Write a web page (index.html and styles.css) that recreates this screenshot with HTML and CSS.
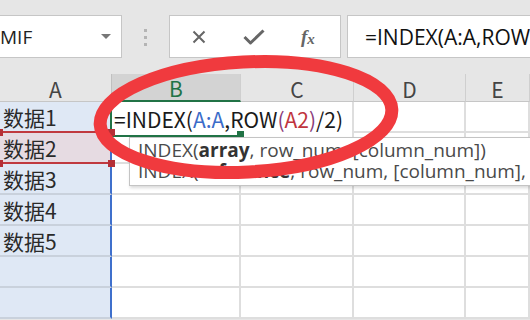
FILE: index.html
```html
<!DOCTYPE html>
<html lang="zh-CN">
<head>
  <meta charset="UTF-8" />
  <title>INDEX ROW</title>
  <link rel="stylesheet" href="styles.css">
</head>
<body>
  <div class="app">

    <div class="toolbar">
      <div class="namebox">
        <span class="name">MIF</span>
        <span class="caret"></span>
      </div>
      <div class="grip"><i></i><i></i><i></i></div>
      <div class="fx-buttons">
        <svg class="icon" width="14" height="14" viewBox="0 0 14 14">
          <path d="M1.5 1.5 L12.5 12.5 M12.5 1.5 L1.5 12.5" stroke="#666" stroke-width="2" fill="none"/>
        </svg>
        <svg class="icon check" width="22" height="16" viewBox="0 0 22 16">
          <path d="M1.5 8 L7.5 14 L20.5 1.5" stroke="#666" stroke-width="3" fill="none" stroke-linejoin="round"/>
        </svg>
        <span class="fx">f<sub>x</sub></span>
      </div>
      <div class="formula">=INDEX(A:A,ROW(A2)/2)</div>
    </div>

    <div class="sheet">
      <div class="hd hd-a">A</div>
      <div class="hd hd-active">B</div>
      <div class="hd">C</div>
      <div class="hd">D</div>
      <div class="hd">E</div>

      <div class="cell col-a row-edit">数据1</div>
      <div class="cell editing">=INDEX(<span class="ref-blue">A:A</span>,ROW<span class="paren">(</span><span class="ref-red">A2</span><span class="paren">)</span>/2)</div>
      <div class="cell"></div>
      <div class="cell"></div>

      <div class="cell col-a ref-cell">数据2<span class="knob left-top"></span><span class="knob left-bottom"></span></div>
      <div class="cell"></div><div class="cell"></div><div class="cell"></div><div class="cell"></div>

      <div class="cell col-a">数据3</div>
      <div class="cell"></div><div class="cell"></div><div class="cell"></div><div class="cell"></div>

      <div class="cell col-a">数据4</div>
      <div class="cell"></div><div class="cell"></div><div class="cell"></div><div class="cell"></div>

      <div class="cell col-a">数据5</div>
      <div class="cell"></div><div class="cell"></div><div class="cell"></div><div class="cell"></div>

      <div class="cell col-a"></div>
      <div class="cell"></div><div class="cell"></div><div class="cell"></div><div class="cell"></div>

      <div class="cell col-a"></div>
      <div class="cell"></div><div class="cell"></div><div class="cell"></div><div class="cell"></div>
    </div>

    <div class="tip">
      <div>INDEX(<b>array</b>, row_num, [column_num])</div>
      <div>INDEX(<b>reference</b>, row_num, [column_num], [area_num])</div>
    </div>

    <svg class="circle" width="530" height="320" viewBox="0 0 530 320">
      <ellipse cx="246" cy="117" rx="146" ry="55" transform="rotate(-3 246 117)"
               fill="none" stroke="#f03a3e" stroke-width="13"/>
    </svg>

  </div>
</body>
</html>
```

FILE: styles.css
```css
* {
  box-sizing: border-box;
}

body {
  margin: 0;
  background: #e6e6e6;
  font-family: "Noto Sans CJK SC", "Noto Sans", sans-serif;
  color: #222;
}

.app {
  position: relative;
  width: 530px;
  height: 320px;
  overflow: hidden;
}

/* formula bar */

.toolbar {
  height: 74px;
  display: flex;
  align-items: flex-start;
  padding-top: 15px;
}

.namebox,
.fx-buttons,
.formula {
  height: 43px;
  background: #fff;
  border: 1px solid #c6c6c6;
  display: flex;
  align-items: center;
}

.namebox {
  width: 123px;
  margin-left: -1px;
  justify-content: space-between;
  padding-right: 10px;
}

.name {
  font-family: "Open Sans", sans-serif;
  font-size: 19px;
}

.caret {
  width: 0;
  height: 0;
  border-left: 5px solid transparent;
  border-right: 5px solid transparent;
  border-top: 5px solid #777;
}

.grip {
  width: 47px;
  display: flex;
  flex-direction: column;
  align-items: center;
  gap: 4px;
  padding-top: 14px;
}

.grip i {
  width: 3px;
  height: 3px;
  background: #b4b4b4;
}

.fx-buttons {
  width: 172px;
  padding-left: 22px;
}

.check {
  margin-left: 37px;
}

.fx {
  margin-left: 36px;
  font-family: "Liberation Serif", serif;
  font-style: italic;
  font-weight: bold;
  font-size: 19px;
  color: #666;
}

.fx sub {
  font-size: 15px;
  vertical-align: -1px;
}

.formula {
  flex: 1;
  margin-left: 6px;
  margin-right: -4px;
  padding-left: 17px;
  font-family: "Open Sans", sans-serif;
  font-size: 21px;
  color: #111;
  white-space: nowrap;
  overflow: hidden;
}

/* grid */

.sheet {
  display: grid;
  grid-template-columns: 112px 129px 113px 112px 1fr;
  grid-template-rows: 28px;
  grid-auto-rows: 31px;
  background: #fff;
}

.hd {
  background: #e6e6e6;
  border-right: 1px solid #cfcfcf;
  border-bottom: 1px solid #c6c6c6;
  display: flex;
  align-items: center;
  justify-content: center;
  font-size: 21px;
  color: #444;
  padding-top: 2px;
}

.hd-a {
  border-right-color: #c0c0c0;
}

.hd-active {
  background: #d3d3d3;
  color: #217346;
  border-bottom: 2px solid #217346;
}

.cell {
  border-right: 2px solid #dedede;
  border-bottom: 2px solid #dedede;
  font-size: 21px;
  white-space: nowrap;
  display: flex;
  align-items: flex-end;
  padding: 0 0 0 3px;
  line-height: 28px;
}

.col-a {
  background: #dfe8f5;
  border-right: 2px solid #3f70cc;
  border-bottom-color: #c9d1dc;
  color: #2a2a2a;
}

.row-edit {
  border-right-color: #217346;
}

.ref-cell {
  position: relative;
  background: #e6dbe2;
  border-top: 2px solid #c0393f;
  border-bottom: 2px solid #c0393f;
  margin-top: -2px;
}

.ref-cell::before,
.ref-cell::after,
.knob {
  content: "";
  position: absolute;
  width: 7px;
  height: 7px;
  background: #b52f36;
}

.ref-cell::before {
  right: -5px;
  top: -4px;
}

.ref-cell::after {
  right: -5px;
  bottom: -5px;
}

.left-top {
  left: -4px;
  top: -4px;
}

.left-bottom {
  left: -4px;
  bottom: -5px;
}

.editing {
  grid-column: span 2;
  position: relative;
  background: #fff;
  padding-left: 2px;
  border-bottom: none;
  color: #1a1a1a;
}

.editing::before {
  content: "";
  position: absolute;
  left: 0;
  top: 0;
  width: 129px;
  height: 33px;
  border-bottom: 2px solid #217346;
}

.editing::after {
  content: "";
  position: absolute;
  left: 125px;
  top: 29px;
  width: 7px;
  height: 7px;
  background: #217346;
}

.ref-blue {
  color: #3b6cc9;
}

.ref-red {
  color: #c0353d;
}

.paren {
  color: #8a3b7a;
}

/* function tooltip */

.tip {
  position: absolute;
  left: 129px;
  top: 137px;
  width: 430px;
  height: 49px;
  background: #fff;
  border: 1px solid #c4c4c4;
  box-shadow: 1px 2px 3px rgba(0, 0, 0, 0.15);
  padding: 2px 0 0 8px;
  font-family: "Open Sans", sans-serif;
  font-size: 19px;
  line-height: 21px;
  color: #4a4a4a;
  white-space: nowrap;
  overflow: hidden;
}

.tip b {
  color: #333;
}

.circle {
  position: absolute;
  left: 0;
  top: 0;
  pointer-events: none;
}
```
